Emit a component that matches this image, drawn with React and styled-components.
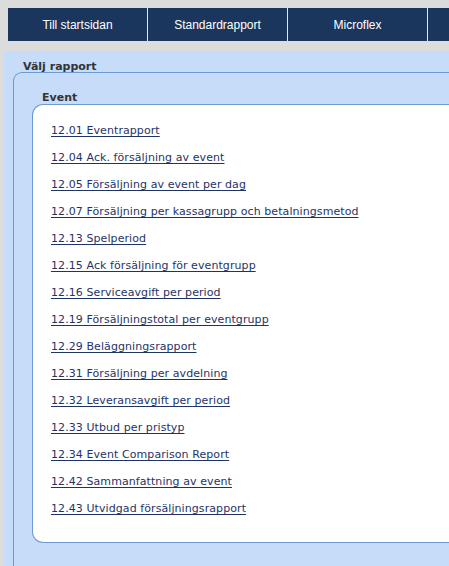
import React from "react";
import styled, { createGlobalStyle } from "styled-components";

const GlobalStyle = createGlobalStyle`
  html, body {
    margin: 0;
    padding: 0;
    background: #dcdcdc;
    overflow: hidden;
  }
`;

const Page = styled.div`
  width: 449px;
  height: 566px;
  overflow: hidden;
  font-family: "DejaVu Sans", Verdana, sans-serif;
`;

const Nav = styled.nav`
  display: flex;
  gap: 1px;
  margin: 8px 0 0 8px;
  background: #e4e8ee;
  overflow: hidden;
`;

const Tab = styled.a`
  flex: 0 0 139px;
  height: 33px;
  display: flex;
  align-items: center;
  justify-content: center;
  background: #1b365d;
  color: #ffffff;
  font-family: "Liberation Sans", Arial, sans-serif;
  font-size: 12px;
  text-decoration: none;
`;

const Panel = styled.div`
  margin: 10px 0 0 4px;
  padding: 10px 0 0 9px;
  background: #c6dcf9;
  height: 600px;
`;

const Heading = styled.div`
  margin-left: ${(p) => p.indent}px;
  font-size: 11px;
  font-weight: bold;
  color: #333333;
  line-height: 11px;
`;

const OuterBox = styled.div`
  border-top: 1px solid #6b9bd2;
  border-left: 1px solid #6b9bd2;
  border-top-left-radius: 9px;
  padding: 19px 0 0 18px;
  height: 600px;
`;

const InnerBox = styled.div`
  margin-top: 1px;
  background: #ffffff;
  border-top: 1px solid #6b9bd2;
  border-left: 1px solid #6b9bd2;
  border-bottom: 1px solid #6b9bd2;
  border-top-left-radius: 11px;
  border-bottom-left-radius: 11px;
  padding: 10px 0 22px 18px;
`;

const LinkList = styled.ul`
  list-style: none;
  margin: 0;
  padding: 0;
`;

const LinkRow = styled.li`
  height: 27px;
  line-height: 27px;
`;

const ReportLink = styled.a`
  font-size: 11px;
  letter-spacing: 0.08px;
  color: #1f3466;
  text-decoration: underline;
  text-underline-offset: 2px;
  cursor: pointer;
`;

const tabs = ["Till startsidan", "Standardrapport", "Microflex", ""];

const reports = [
  "12.01 Eventrapport",
  "12.04 Ack. försäljning av event",
  "12.05 Försäljning av event per dag",
  "12.07 Försäljning per kassagrupp och betalningsmetod",
  "12.13 Spelperiod",
  "12.15 Ack försäljning för eventgrupp",
  "12.16 Serviceavgift per period",
  "12.19 Försäljningstotal per eventgrupp",
  "12.29 Beläggningsrapport",
  "12.31 Försäljning per avdelning",
  "12.32 Leveransavgift per period",
  "12.33 Utbud per pristyp",
  "12.34 Event Comparison Report",
  "12.42 Sammanfattning av event",
  "12.43 Utvidgad försäljningsrapport",
];

export default function App() {
  return (
    <Page>
      <GlobalStyle />
      <Nav>
        {tabs.map((t, i) => (
          <Tab key={i}>{t}</Tab>
        ))}
      </Nav>
      <Panel>
        <Heading indent={10}>Välj rapport</Heading>
        <OuterBox>
          <Heading indent={10}>Event</Heading>
          <InnerBox>
            <LinkList>
              {reports.map((r) => (
                <LinkRow key={r}>
                  <ReportLink>{r}</ReportLink>
                </LinkRow>
              ))}
            </LinkList>
          </InnerBox>
        </OuterBox>
      </Panel>
    </Page>
  );
}
